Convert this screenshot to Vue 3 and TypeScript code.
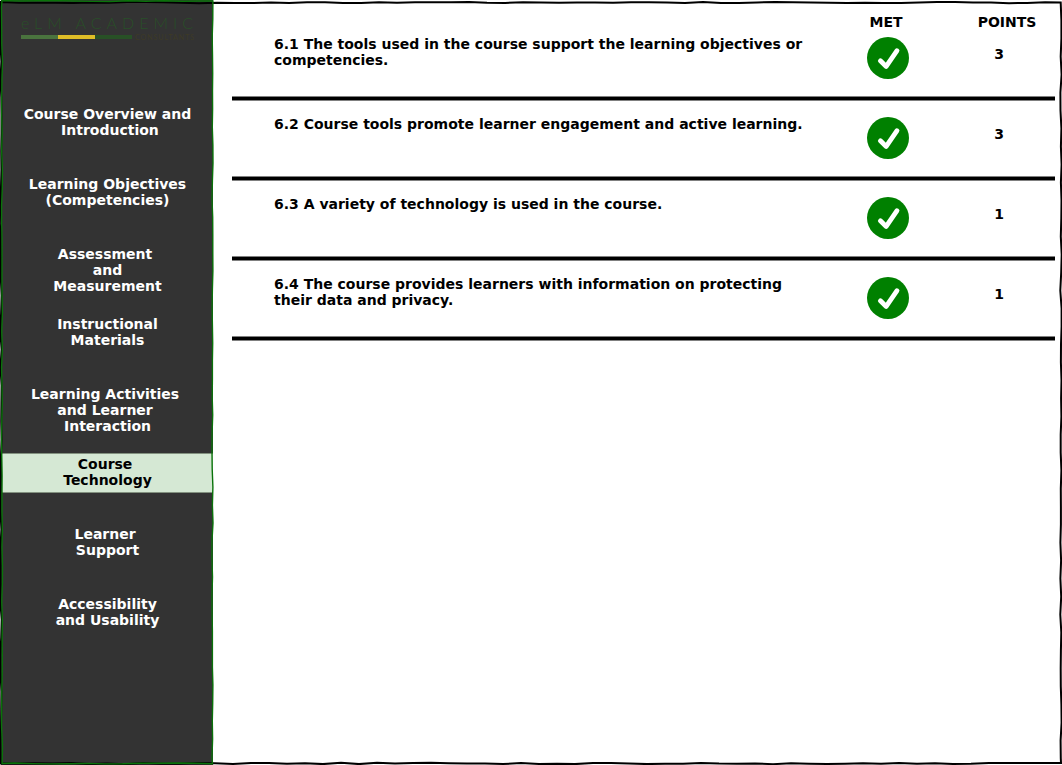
<script setup lang="ts">
import { ref } from 'vue'

interface Section { id: string; lines: string[] }
interface Criterion { text: string; points: number; met: boolean }

const sections: Section[] = [
  { id: 'overview', lines: ['Course Overview and', '\u00a0Introduction'] },
  { id: 'objectives', lines: ['Learning Objectives', '(Competencies)'] },
  { id: 'assessment', lines: ['Assessment\u00a0', 'and', 'Measurement'] },
  { id: 'materials', lines: ['Instructional', 'Materials'] },
  { id: 'activities', lines: ['Learning Activities\u00a0', 'and Learner\u00a0', 'Interaction'] },
  { id: 'technology', lines: ['Course\u00a0', 'Technology'] },
  { id: 'support', lines: ['Learner\u00a0', 'Support'] },
  { id: 'accessibility', lines: ['Accessibility', 'and Usability'] },
]
const active = ref('technology')

const criteria: Criterion[] = [
  { text: '6.1 The tools used in the course support the learning objectives or competencies.', points: 3, met: true },
  { text: '6.2 Course tools promote learner engagement and active learning.', points: 3, met: true },
  { text: '6.3 A variety of technology is used in the course.', points: 1, met: true },
  { text: '6.4 The course provides learners with information on protecting their data and privacy.', points: 1, met: true },
]

// Hand-drawn outline: a rectangle whose edges wander slightly.
function sketch(x0: number, y0: number, x1: number, y1: number, seed: number, amp: number): string {
  let s = seed
  const rnd = () => {
    s = (s * 16807) % 2147483647
    return ((s / 2147483647) * 2 - 1) * amp
  }
  const pts: string[] = []
  const step = 18
  for (let x = x0; x < x1; x += step) pts.push(`${x},${(y0 + rnd()).toFixed(1)}`)
  for (let y = y0; y < y1; y += step) pts.push(`${(x1 + rnd()).toFixed(1)},${y}`)
  for (let x = x1; x > x0; x -= step) pts.push(`${x},${(y1 + rnd()).toFixed(1)}`)
  for (let y = y1; y > y0; y -= step) pts.push(`${(x0 + rnd()).toFixed(1)},${y}`)
  return `M${pts.join('L')}Z`
}
const frame = sketch(1, 2.5, 1061, 763.5, 4711, 0.7)
const panel = sketch(2, 1, 212.5, 763.5, 977, 0.5)
</script>

<template>
  <div class="page">
    <aside class="sidebar">
      <svg class="logo" viewBox="0 0 180 34" role="img" aria-label="eLM Academic Consultants">
        <text class="brand" x="0" y="19">eLM ACADEMIC</text>
        <rect x="0" y="25" width="37" height="4" fill="#4a733e" />
        <rect x="37" y="25" width="37" height="4" fill="#dfbd27" />
        <rect x="74" y="25" width="37" height="4" fill="#285026" />
        <text class="brand-sub" x="114" y="30">CONSULTANTS</text>
      </svg>
      <nav class="nav" aria-label="Review sections">
        <a
          v-for="s in sections"
          :key="s.id"
          :href="'#' + s.id"
          class="item"
          :class="{ active: s.id === active }"
          @click.prevent="active = s.id"
        >
          <span v-for="line in s.lines" :key="line" class="line">{{ line }}</span>
        </a>
      </nav>
    </aside>

    <main class="content">
      <table class="rubric">
        <thead>
          <tr><th class="c-text"></th><th class="c-met">MET</th><th class="c-points">POINTS</th></tr>
        </thead>
        <tbody>
          <tr v-for="c in criteria" :key="c.text">
            <td class="c-text">{{ c.text }}</td>
            <td class="c-met">
              <svg v-if="c.met" class="check" viewBox="0 0 42 42" role="img" aria-label="Met">
                <circle cx="21" cy="21" r="21" fill="#008000" />
                <path d="M13.4 23.8L19.2 29.4L30 13.7" fill="none" stroke="#fff" stroke-width="4.8" stroke-linecap="round" stroke-linejoin="round" />
              </svg>
            </td>
            <td class="c-points points">{{ c.points }}</td>
          </tr>
        </tbody>
      </table>
    </main>

    <svg class="outline" viewBox="0 0 1062 765" preserveAspectRatio="none" aria-hidden="true">
      <path :d="frame" fill="none" stroke="#000" stroke-width="2" />
      <path :d="panel" fill="none" stroke="#0a730a" stroke-width="1.4" />
    </svg>
  </div>
</template>

<style>
body { margin: 0; background: #fff; }
</style>

<style scoped>
.page {
  position: relative;
  display: flex;
  min-height: 100vh;
  font: bold 14px/16px "DejaVu Sans", Verdana, sans-serif;
  color: #000;
}
.sidebar {
  box-sizing: border-box;
  flex: 0 0 213px;
  padding: 10px 0 0 2px;
  background: linear-gradient(90deg, #fff 1px, #333 1px);
}
.logo { display: block; width: 180px; height: 34px; margin-left: 19px; overflow: visible; }
.brand { font: 300 16px Lato, sans-serif; letter-spacing: 5px; fill: #294f28; }
.brand-sub { font: 400 7px Lato, sans-serif; letter-spacing: 1px; fill: #3d3a26; }
.nav { display: grid; grid-auto-rows: 70px; align-items: start; margin-top: 59px; }
.item {
  box-sizing: border-box;
  min-height: 40px;
  padding: 3px 0;
  border: 0;
  color: #fff;
  text-align: center;
  text-decoration: none;
}
.item.active { background: #d5e8d4; color: #000; box-shadow: inset 0 1px #82917f, inset 0 -1px #82917f; }
.line { display: block; white-space: nowrap; }
.content { flex: 1; min-width: 0; padding: 0 7px 0 19px; }
.rubric { width: 100%; border-collapse: separate; border-spacing: 0; table-layout: fixed; }
th, td { box-sizing: border-box; padding: 0; vertical-align: top; }
th { height: 31px; padding-top: 14px; }
th.c-points { padding-left: 16px; }
tbody tr { --lift: 0px; height: 80px; }
tbody tr:first-child { --lift: 10px; height: 70px; }
td {
  border-bottom: 1px solid #808080;
  box-shadow: inset 0 -3px #000, inset 0 -4px #808080;
}
td.c-text { padding: calc(15px - var(--lift)) 20px 0 42px; }
td.c-met { padding: calc(16px - var(--lift)) 0 0 4px; }
td.points { padding-top: calc(25px - var(--lift)); }
.c-met { width: 114px; text-align: center; }
.c-points { width: 112px; text-align: center; }
.check { display: block; width: 42px; height: 42px; margin: 0 auto; }
.outline {
  position: absolute;
  inset: 0;
  width: 100%;
  height: 100%;
  pointer-events: none;
}
</style>
